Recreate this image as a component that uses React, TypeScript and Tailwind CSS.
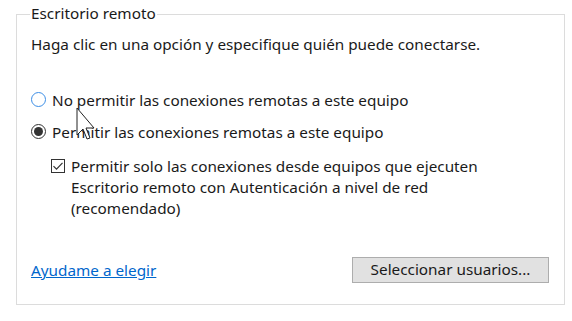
import React from "react";

export default function App() {
  const font = { fontFamily: '"Segoe UI", "Noto Sans", "Liberation Sans", sans-serif' };
  return (
    <div className="w-[572px] h-[321px] bg-white relative overflow-hidden text-[15.3px] text-[#1a1a1a]" style={font}>
      <div className="absolute left-[16px] top-[14px] w-[549px] h-[291px] border border-[#dcdcdc]" />
      <div className="relative pl-[31px] pr-[7px] pt-[2px]">
        <div className="leading-[20px] bg-white inline-block px-[1px] -ml-[1px]">Escritorio remoto</div>
        <div className="mt-[9px] leading-[20px]">Haga clic en una opción y especifique quién puede conectarse.</div>
        <div className="mt-[36px] flex items-center gap-[6px] leading-[20px]">
          <span className="w-[15px] h-[15px] rounded-full border border-[#3c8ee6] bg-white" />
          <span>No permitir las conexiones remotas a este equipo</span>
        </div>
        <div className="mt-[12px] flex items-center gap-[6px] leading-[20px]">
          <span className="w-[15px] h-[15px] rounded-full border border-[#333] bg-white flex items-center justify-center">
            <span className="w-[9px] h-[9px] rounded-full bg-[#333]" />
          </span>
          <span>Permitir las conexiones remotas a este equipo</span>
        </div>
        <div className="mt-[14px] ml-[20px] flex items-start gap-[6px] leading-[21px]">
          <span className="mt-[3px] w-[14px] h-[14px] border border-[#333] bg-white flex items-center justify-center shrink-0">
            <svg width="12" height="12" viewBox="0 0 12 12"><path d="M1.5 6.2 L4.5 9.2 L10.5 2.8" fill="none" stroke="#333" strokeWidth="1.2" /></svg>
          </span>
          <span>Permitir solo las conexiones desde equipos que ejecuten<br />Escritorio remoto con Autenticación a nivel de red<br />(recomendado)</span>
        </div>
        <div className="mt-[38px] flex items-center justify-between pr-[16px]">
          <a className="text-[#0066cc] underline leading-[20px]">Ayudame a elegir</a>
          <button className="w-[197px] h-[26px] bg-[#e1e1e1] border border-[#adadad] text-[#1a1a1a] text-[15.3px]" style={font}>Seleccionar usuarios...</button>
        </div>
      </div>
      <svg className="absolute left-[76px] top-[107px]" width="20" height="34" viewBox="0 0 20 34">
        <path d="M1 1 L1 28 L7 22 L11 32 L14 31 L10 21 L18 21 Z" fill="white" stroke="#222" strokeWidth="1" />
      </svg>
    </div>
  );
}
